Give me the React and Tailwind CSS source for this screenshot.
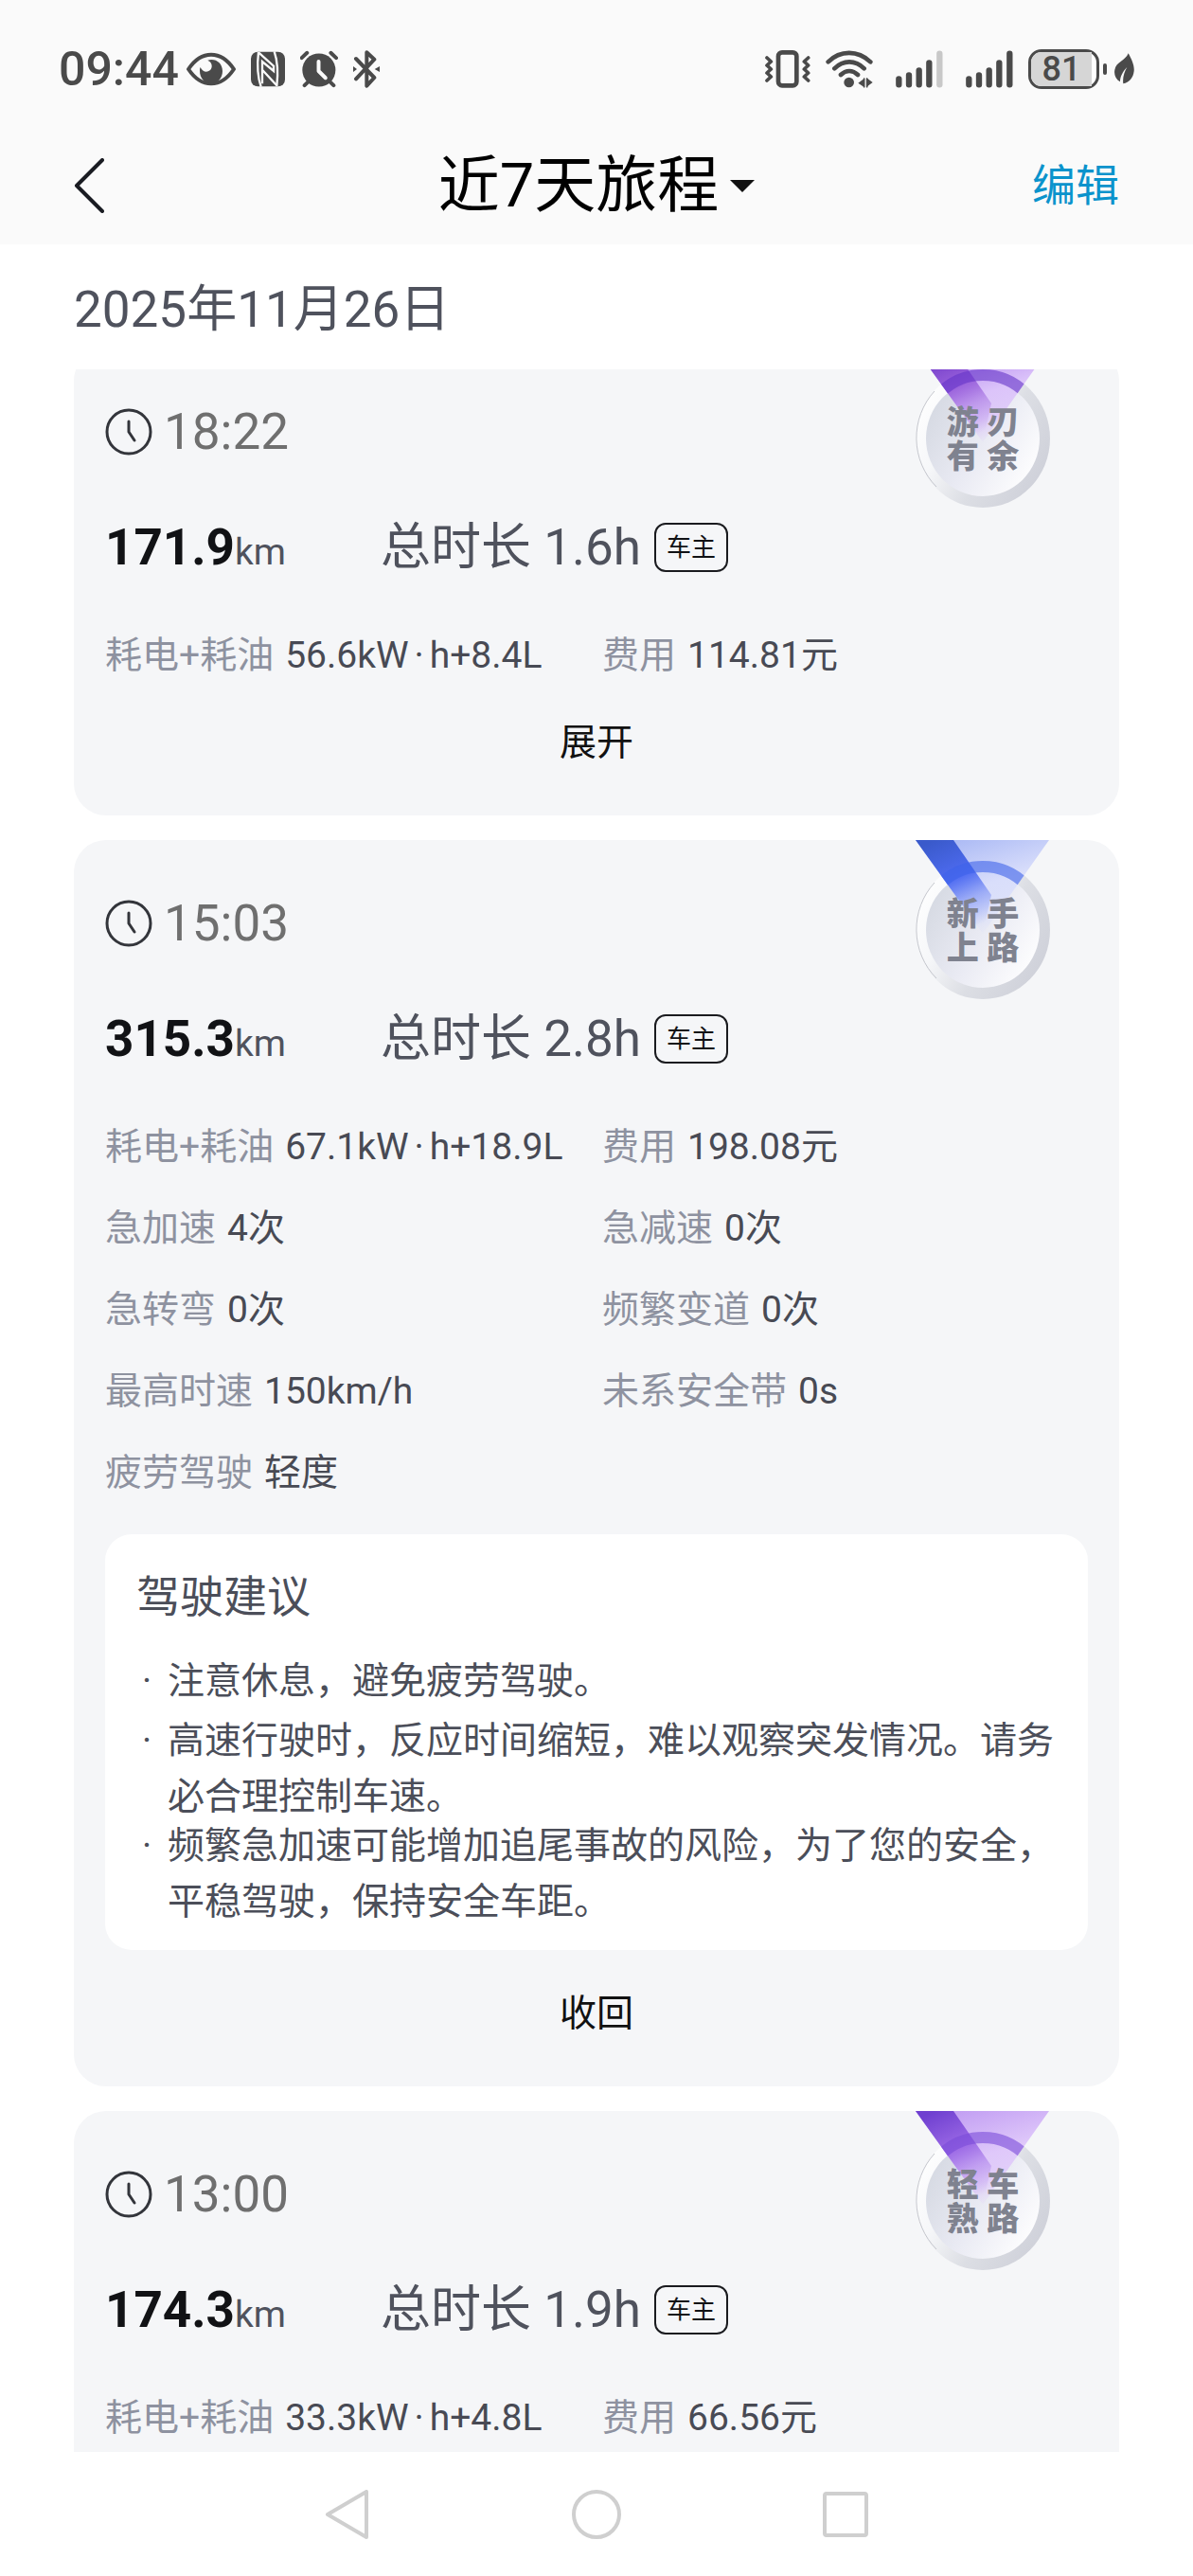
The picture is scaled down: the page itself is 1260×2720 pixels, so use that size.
import { useState } from "react";

const trips = [
  {
    id: 1,
    time: "18:22",
    distance: "171.9",
    duration: "1.6h",
    medal: ["游 刃", "有 余"],
    ribbon: "violet",
    stats: [
      { label: "耗电+耗油", value: ["56.6kW", "h+8.4L"] },
      { label: "费用", value: ["114.81元"] },
    ],
    action: "展开",
  },
  {
    id: 2,
    time: "15:03",
    distance: "315.3",
    duration: "2.8h",
    medal: ["新 手", "上 路"],
    ribbon: "blue",
    stats: [
      { label: "耗电+耗油", value: ["67.1kW", "h+18.9L"] },
      { label: "费用", value: ["198.08元"] },
      { label: "急加速", value: ["4次"] },
      { label: "急减速", value: ["0次"] },
      { label: "急转弯", value: ["0次"] },
      { label: "频繁变道", value: ["0次"] },
      { label: "最高时速", value: ["150km/h"] },
      { label: "未系安全带", value: ["0s"] },
      { label: "疲劳驾驶", value: ["轻度"] },
    ],
    advice: [
      { text: "注意休息，避免疲劳驾驶。" },
      { text: "高速行驶时，反应时间缩短，难以观察突发情况。请务必合理控制车速。", long: true },
      { text: "频繁急加速可能增加追尾事故的风险，为了您的安全，平稳驾驶，保持安全车距。", long: true },
    ],
    action: "收回",
  },
  {
    id: 3,
    time: "13:00",
    distance: "174.3",
    duration: "1.9h",
    medal: ["轻 车", "熟 路"],
    ribbon: "purple",
    stats: [
      { label: "耗电+耗油", value: ["33.3kW", "h+4.8L"] },
      { label: "费用", value: ["66.56元"] },
    ],
  },
];

const ribbons = {
  violet: { dark: "#6a35c4", mid: "#9a62dc", light: "#b184ee", lightEnd: "#dcc4fa", ring: "#6434c8" },
  blue: { dark: "#3a5acb", mid: "#4f6cf2", light: "#aebcf5", lightEnd: "#d9defb", ring: "#3d63ea" },
  purple: { dark: "#6f40d0", mid: "#9c6ae6", light: "#c3a0f3", lightEnd: "#dfc8fa", ring: "#7a4bd8" },
};

function SignalBars({ faded }) {
  return (
    <svg className="h-10 w-[50px]" viewBox="500 66 150 120" fill="none" stroke="#4a4a4a" strokeWidth="19" strokeLinecap="round">
      <path d="M510 157v18M542 145v30M574 130v45M606 106v69" />
      <path d="M639 77v98" stroke={faded ? "#c8c8c8" : "#4a4a4a"} />
    </svg>
  );
}

function StatusBar() {
  return (
    <div className="flex h-[132px] items-center justify-between px-[62px] pt-3.5 text-[#4a4a4a]">
      <div className="flex items-center gap-4">
        <div className="flex items-center gap-2">
          <span className="text-[50px] leading-[60px] font-medium">09:44</span>
          <svg className="h-10 w-[52px]" viewBox="468 66 156 120" fill="none">
            <path d="M474 126C494 96 518 80 546 80s52 16 72 46c-20 30-44 46-72 46s-52-16-72-46z" stroke="#4a4a4a" strokeWidth="12" strokeLinejoin="round" />
            <path d="M535 98c24-8 47 8 47 34 0 22-16 40-36 40s-36-18-36-40c0-4 0-8 2-12 6 14 20 18 30 10 10-9 8-26-7-32z" fill="currentColor" />
          </svg>
        </div>
        <svg className="h-10 w-9" viewBox="672 66 108 120">
          <rect x="672" y="71" width="108" height="110" rx="22" fill="currentColor" />
          <path d="M696 72c-4 34-4 76 8 110M754 180c4-36 4-76-8-110" stroke="#fafafa" strokeWidth="7" fill="none" />
          <path d="M697 74l47 42v16l-36-30v70M708 128l46 50" stroke="#fafafa" strokeWidth="7" fill="none" />
        </svg>
        <svg className="h-10 w-10" viewBox="829 66 121 120" fill="none" strokeLinecap="round" strokeLinejoin="round">
          <circle cx="889" cy="129" r="53" fill="currentColor" />
          <path d="M834 90l17-16M944 90l-17-16M843 178l14-14M936 178l-14-14" stroke="#4a4a4a" strokeWidth="12" />
          <path d="M888 102v30l22 22" stroke="#fafafa" strokeWidth="12" />
        </svg>
        <svg className="h-10 w-7" viewBox="996 66 84 120" fill="none" stroke="#4a4a4a" strokeWidth="12" strokeLinejoin="round" strokeLinecap="round">
          <path d="M1005 93l58 60-24 26V73l24 22-58 62" />
          <path d="M996 117l12 9-12 9zM1080 117l-16 9 16 9z" fill="#4a4a4a" stroke="none" />
        </svg>
      </div>

      <div className="flex items-center gap-6">
        <div className="flex items-center gap-4">
          <svg className="h-10 w-12" viewBox="92 66 144 120" fill="none" stroke="#4a4a4a" strokeLinejoin="round" strokeLinecap="round">
            <rect x="134" y="73" width="58" height="105" rx="12" strokeWidth="14" />
            <path d="M98 90l13 12-13 12 13 12-13 12 13 12-13 12M229 90l-13 12 13 12-13 12 13 12-13 12 13 12" strokeWidth="11" />
          </svg>
          <svg className="h-10 w-[50px]" viewBox="281 66 150 120" fill="none" stroke="#4a4a4a" strokeWidth="14" strokeLinecap="round">
            <path d="M289 103c38-38 94-38 134 0M309 124c28-28 66-28 94 0M329 144c16-16 38-16 54 0" />
            <circle cx="355" cy="168" r="16" fill="#4a4a4a" stroke="none" />
            <path d="M384 170l20-15v29zM430 168l-19-14v28z" fill="#4a4a4a" stroke="none" />
            <path d="M403 156v26M412 156v26" strokeWidth="5" />
          </svg>
        </div>
        <SignalBars faded />
        <div className="flex items-center gap-4">
          <SignalBars />
          <div className="flex items-center gap-2">
            <div className="flex items-center gap-1">
              <div className="h-[42px] w-[75px] rounded-[14px] border-[3px] border-[#4a4a4a] bg-white">
                <div className="h-9 w-16 rounded-l-[11px] bg-[#d6d6d6] text-center text-[36px] leading-9 font-medium">81</div>
              </div>
              <div className="h-3 w-1 rounded-full bg-[#4a4a4a]" />
            </div>
            <svg className="h-10 w-[21px]" viewBox="1187 66 63 120">
              <path d="M1231 76c10 18 20 38 18 56-2 22-16 36-34 40-3-20 4-38 12-52-14 14-22 30-22 46-14-8-20-22-17-38 5-26 34-28 43-52z" fill="currentColor" />
            </svg>
          </div>
        </div>
      </div>
    </div>
  );
}

function Header() {
  return (
    <header className="grid h-[126px] grid-cols-[1fr_auto_1fr] items-center px-[78px] pt-0.5">
      <button type="button" aria-label="返回" className="justify-self-start">
        <svg className="h-[58px] w-8" viewBox="0 0 32 58" fill="none" stroke="#1a1c22" strokeWidth="4" strokeLinecap="round" strokeLinejoin="round">
          <path d="M30 2L3 29l27 27" />
        </svg>
      </button>
      <button type="button" className="flex items-center gap-3">
        <h1 className="text-[65px] leading-[80px] text-black">近7天旅程</h1>
        <svg className="h-[13px] w-[26px]" viewBox="0 0 26 13">
          <path d="M0 0h26L13 13z" fill="#111" />
        </svg>
      </button>
      <button type="button" className="justify-self-end text-[46px] leading-[60px] text-[#0a93cc]">
        编辑
      </button>
    </header>
  );
}

function Medal({ id, lines, ribbon }) {
  const c = ribbons[ribbon];
  return (
    <div className="absolute top-0 right-[73px] h-[170px] w-[142px]">
      <svg className="h-full w-full" viewBox="0 0 142 170">
        <defs>
          <linearGradient id={`rim-${id}`} x1="0" y1="0.2" x2="1" y2="0.8">
            <stop offset="0" stopColor="#ffffff" />
            <stop offset="0.3" stopColor="#f6f7f9" />
            <stop offset="0.6" stopColor="#dcdee4" />
            <stop offset="1" stopColor="#cdcfd8" />
          </linearGradient>
          <linearGradient id={`face-${id}`} x1="0" y1="0.2" x2="1" y2="0.8">
            <stop offset="0" stopColor="#d4d8e1" />
            <stop offset="0.5" stopColor="#e9eaf3" />
            <stop offset="1" stopColor="#ffffff" />
          </linearGradient>
          <linearGradient id={`dark-${id}`} gradientUnits="userSpaceOnUse" x1="20" y1="0" x2="62" y2="92">
            <stop offset="0" stopColor={c.dark} />
            <stop offset="0.45" stopColor={c.mid} />
            <stop offset="0.7" stopColor={c.mid} stopOpacity="0.45" />
            <stop offset="1" stopColor={c.mid} stopOpacity="0" />
          </linearGradient>
          <linearGradient id={`light-${id}`} gradientUnits="userSpaceOnUse" x1="50" y1="0" x2="80" y2="99">
            <stop offset="0" stopColor={c.light} />
            <stop offset="0.5" stopColor={c.lightEnd} />
            <stop offset="0.75" stopColor={c.lightEnd} stopOpacity="0.8" />
            <stop offset="1" stopColor={c.lightEnd} stopOpacity="0" />
          </linearGradient>
          <clipPath id={`clip-${id}`}>
            <path d="M0 0h141L71 99z" />
          </clipPath>
        </defs>
        <ellipse cx="71" cy="95" rx="71" ry="73" fill={`url(#rim-${id})`} />
        <path d="M20 45A70 72 0 0 0 22 146" fill="none" stroke="#c3c5cc" strokeWidth="1" />
        <ellipse cx="71" cy="95" rx="60" ry="61" fill={`url(#face-${id})`} />
        <path d="M0 0h141L71 99z" fill={`url(#light-${id})`} />
        <path d="M0 0h40l40 58-9 41z" fill={`url(#dark-${id})`} />
        <g clipPath={`url(#clip-${id})`}>
          <ellipse cx="71" cy="95" rx="65" ry="67" fill="none" stroke={c.ring} strokeWidth="12" opacity="0.6" />
        </g>
      </svg>
      <div className="absolute inset-x-0 top-[60px] text-center text-[34px] leading-[36px] font-black text-[#7f828f]">
        {lines.map((line) => (
          <p key={line}>{line}</p>
        ))}
      </div>
    </div>
  );
}

function Stat({ label, value }) {
  return (
    <div className="flex gap-3">
      <dt className="text-[#8e92a0]">{label}</dt>
      <dd className="text-[#484a54]">
        {value[0]}
        {value[1] && (
          <>
            <span className="mx-1.5">·</span>
            {value[1]}
          </>
        )}
      </dd>
    </div>
  );
}

function TripCard({ trip }) {
  const [pressed, setPressed] = useState(false);

  return (
    <article className="relative rounded-[34px] bg-[#f5f6f8] px-[33px] pt-[58px] pb-7">
      <Medal id={trip.id} lines={trip.medal} ribbon={trip.ribbon} />

      <div className="flex items-center gap-3">
        <svg className="size-[50px]" viewBox="0 0 50 50" fill="none" stroke="#33353b" strokeWidth="3" strokeLinecap="round" strokeLinejoin="round">
          <circle cx="25" cy="25" r="23" />
          <path d="M25 14v11l6 9" />
        </svg>
        <time className="text-[53px] leading-[60px] text-[#6f6f6f]">{trip.time}</time>
      </div>

      <div className="mt-[62px] flex items-center text-[53px] leading-[60px] text-[#4f525d]">
        <p className="min-w-[291px]">
          <span className="font-bold text-[#111215]">{trip.distance}</span>
          <span className="text-[39px] leading-none">km</span>
        </p>
        <p>总时长 {trip.duration}</p>
        <span className="ml-3.5 flex h-[52px] items-center rounded-[12px] border-2 border-[#1a1b1f] px-[11px] text-[26px] leading-[30px] text-[#111215]">
          车主
        </span>
      </div>

      <dl className="mt-[41px] grid grid-cols-2 gap-x-3 text-[39px] leading-[86px]">
        {trip.stats.map((s) => (
          <Stat key={s.label} label={s.label} value={s.value} />
        ))}
      </dl>

      {trip.advice && (
        <section className="mt-[22px] mb-[18px] rounded-[28px] bg-white px-[33px] pt-9 pb-7 text-[#4b4e59]">
          <h2 className="text-[46px] leading-[60px]">驾驶建议</h2>
          <ul className="mt-[30px] text-[39px] leading-[59px]">
            {trip.advice.map((item) => (
              <li key={item.text} className={item.long ? "-mb-[7px] flex" : "mb-1 flex"}>
                <span className="mr-[11px] w-[22px] shrink-0 text-center">·</span>
                <p>{item.text}</p>
              </li>
            ))}
          </ul>
        </section>
      )}

      {trip.action && (
        <button
          type="button"
          aria-pressed={pressed}
          onClick={() => setPressed((p) => !p)}
          className="block w-full text-center text-[39px] leading-[98px] text-[#111]"
        >
          {trip.action}
        </button>
      )}
    </article>
  );
}

function NavBar() {
  return (
    <nav className="flex h-[131px] shrink-0 items-center justify-center gap-[211px] bg-white">
      <button type="button" aria-label="后退">
        <svg className="size-[52px]" viewBox="0 0 52 52" fill="none" stroke="#cfcfcf" strokeWidth="4" strokeLinejoin="round">
          <path d="M46 2v48L5 26z" />
        </svg>
      </button>
      <button type="button" aria-label="主页">
        <svg className="size-[52px]" viewBox="0 0 52 52" fill="none" stroke="#cfcfcf" strokeWidth="4">
          <circle cx="26" cy="26" r="24" />
        </svg>
      </button>
      <button type="button" aria-label="最近任务">
        <svg className="size-[52px]" viewBox="0 0 52 52" fill="none" stroke="#cfcfcf" strokeWidth="4">
          <rect x="4" y="4" width="44" height="44" rx="2" />
        </svg>
      </button>
    </nav>
  );
}

export default function App() {
  return (
    <div lang="zh-CN" className="flex h-screen flex-col bg-white font-[Roboto,'Noto_Sans_CJK_SC',sans-serif]">
      <div className="shrink-0 bg-[#fafafa]">
        <StatusBar />
        <Header />
      </div>
      <p className="shrink-0 px-[78px] pt-1.5 text-[53px] leading-[126px] text-[#4f525d]">2025年11月26日</p>
      {/* list is scrolled a little, so the first card starts under the date */}
      <main className="min-h-0 flex-1 overflow-y-auto px-[78px] [scrollbar-width:none]">
        <div className="-mt-[22px] flex flex-col gap-[26px]">
          {trips.map((trip) => (
            <TripCard key={trip.id} trip={trip} />
          ))}
        </div>
      </main>
      <NavBar />
    </div>
  );
}
